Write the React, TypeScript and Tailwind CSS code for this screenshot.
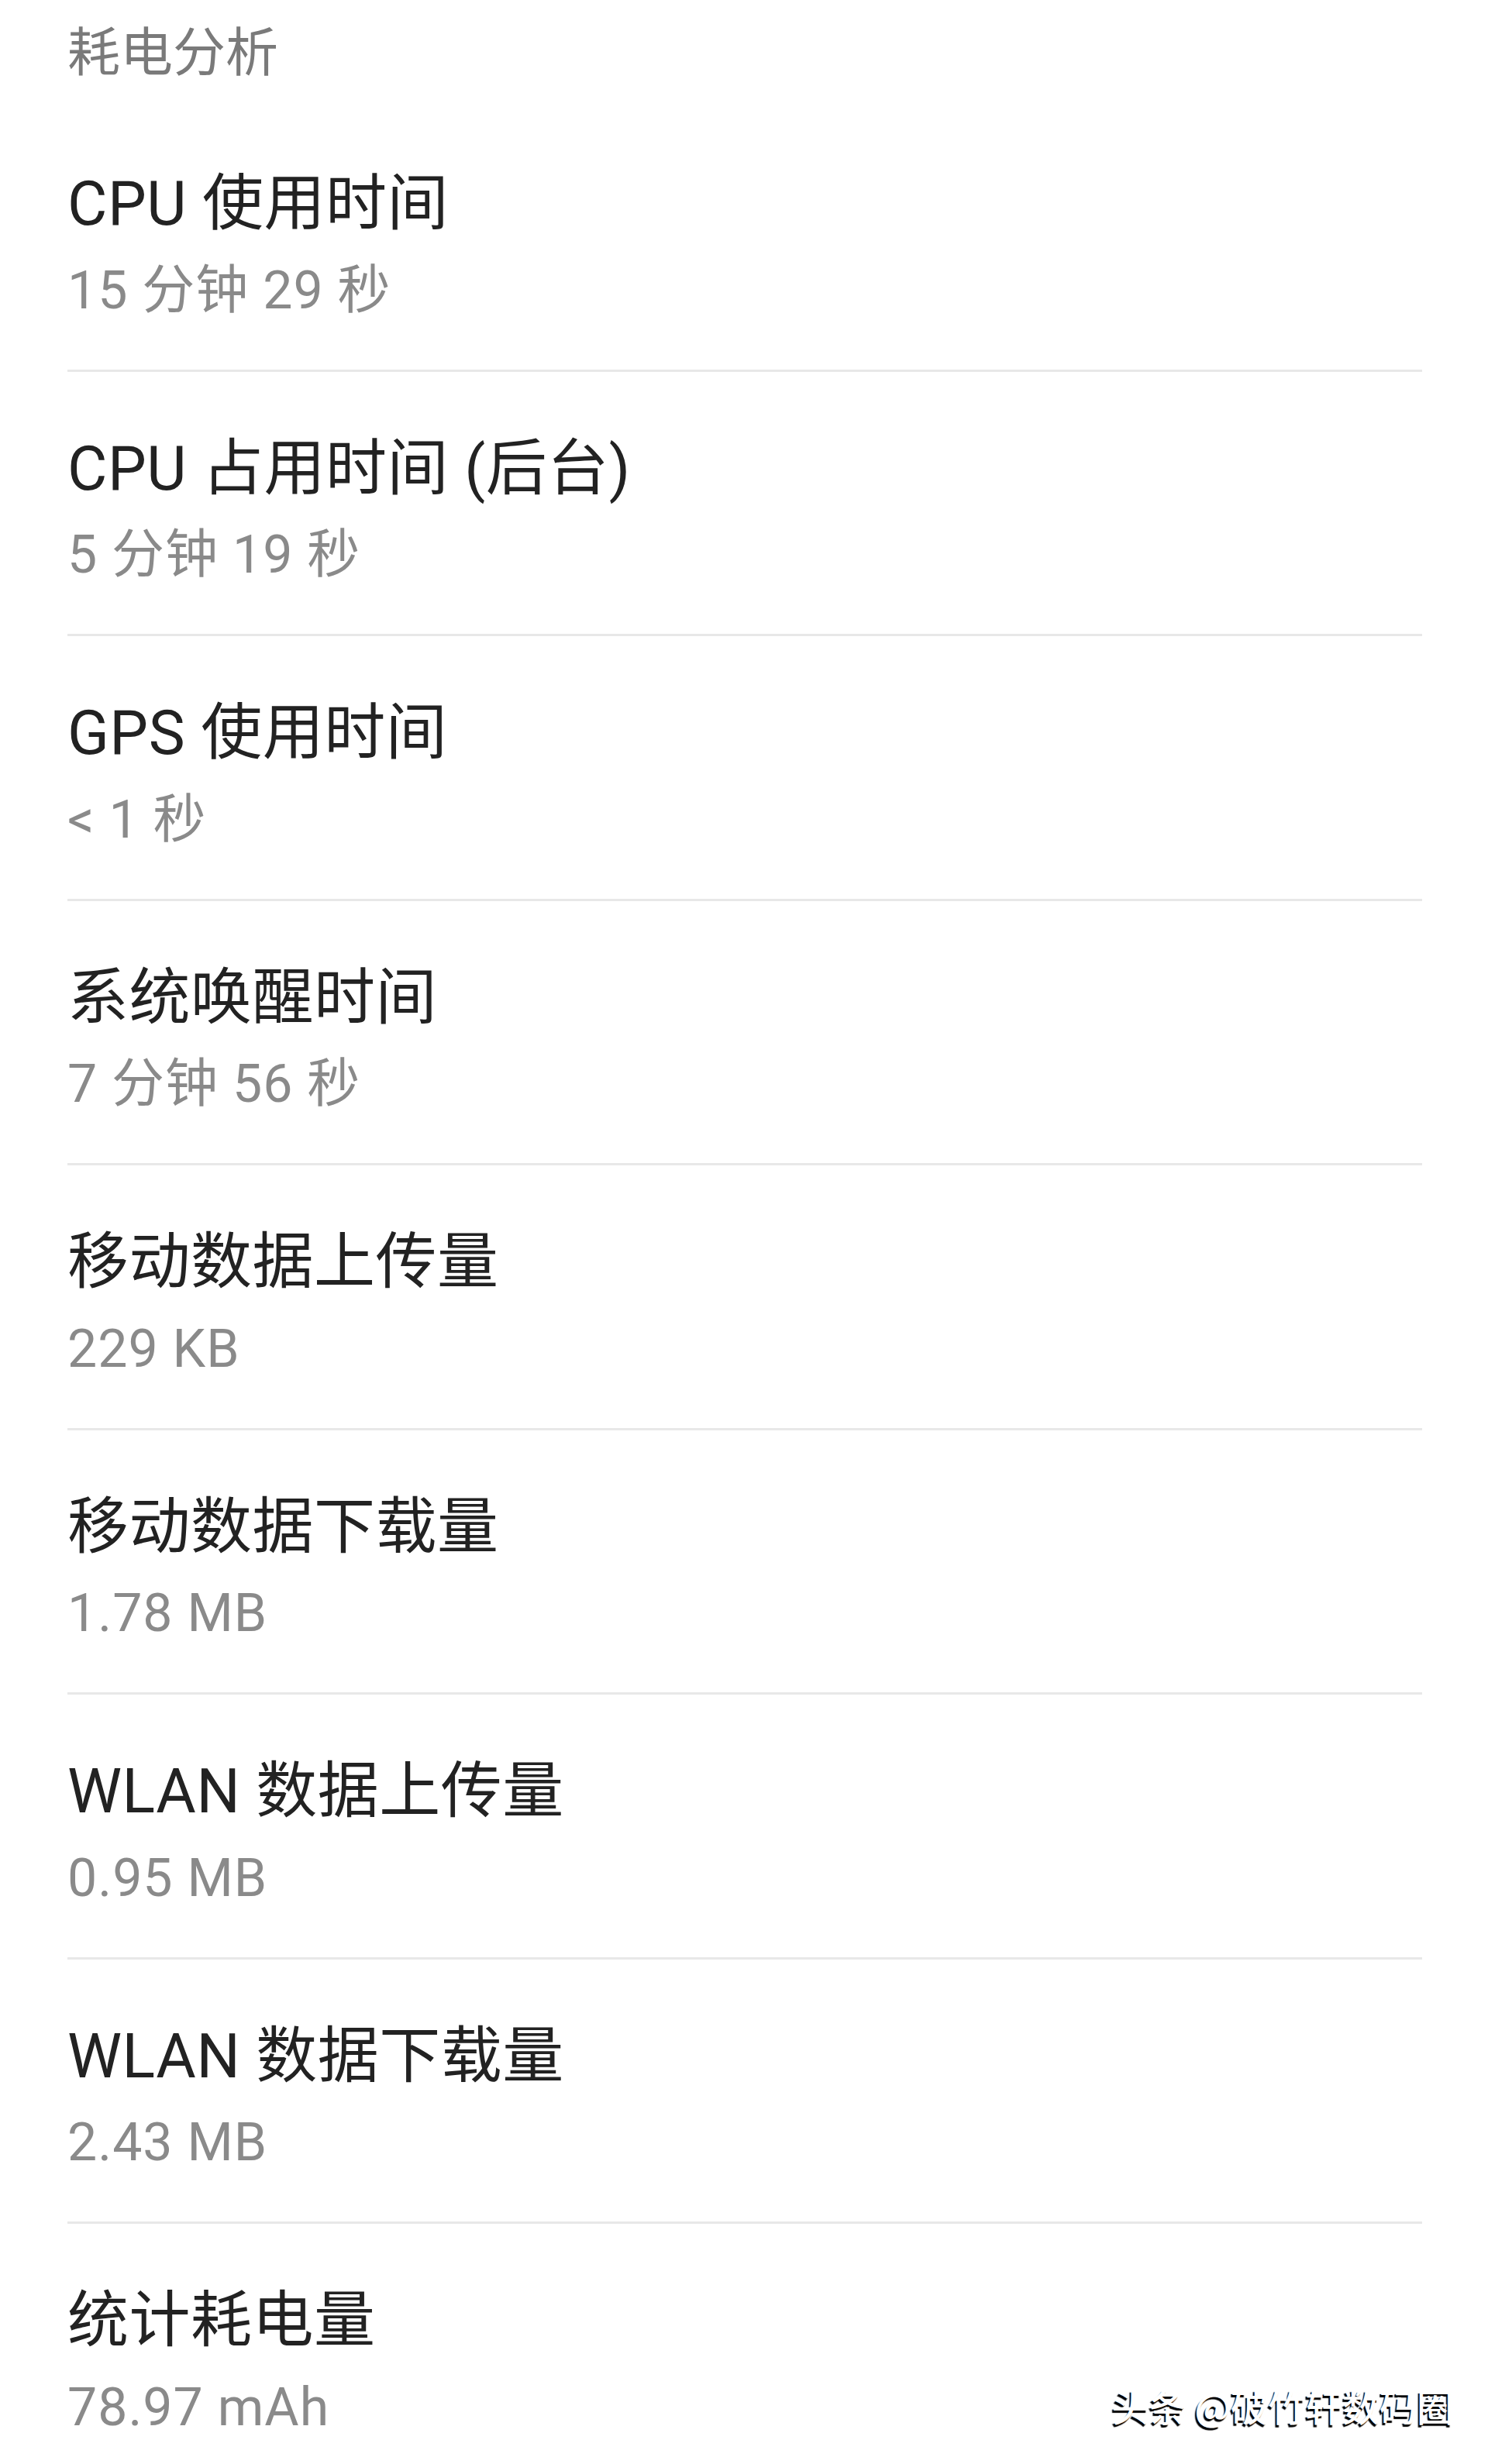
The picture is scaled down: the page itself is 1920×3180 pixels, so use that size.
const rows = [
  { title: "CPU 使用时间", value: "15 分钟 29 秒" },
  { title: "CPU 占用时间 (后台)", value: "5 分钟 19 秒" },
  { title: "GPS 使用时间", value: "< 1 秒" },
  { title: "系统唤醒时间", value: "7 分钟 56 秒" },
  { title: "移动数据上传量", value: "229 KB" },
  { title: "移动数据下载量", value: "1.78 MB" },
  { title: "WLAN 数据上传量", value: "0.95 MB" },
  { title: "WLAN 数据下载量", value: "2.43 MB" },
  { title: "统计耗电量", value: "78.97 mAh" },
];

export default function App() {
  return (
    <div className="relative w-[1920px] h-[3180px] overflow-hidden bg-white pl-[87px] pr-[85px] font-['Roboto','Noto_Sans_CJK_SC',sans-serif]">
      <div className="h-[138px] pt-[35px]">
        <h2 className="text-[68px] leading-none font-normal text-[#7a7a7a]">耗电分析</h2>
      </div>

      <ul className="flex flex-col">
        {rows.map((row, i) => (
          <li
            key={row.title}
            className={
              i < rows.length - 1
                ? "flex flex-col pt-[86px] pb-[68px] border-b-[3px] border-[#e8e8e8]"
                : "flex flex-col pt-[86px]"
            }
          >
            <span className="text-[79px] leading-none tracking-[0.5px] text-[#222222]">{row.title}</span>
            <span className="mt-[37.5px] text-[68px] leading-none tracking-[1px] text-[#8a8a8a]">{row.value}</span>
          </li>
        ))}
      </ul>

      {/* watermark */}
      <div className="absolute right-[44px] bottom-[52px] text-[48px] leading-none font-medium text-white font-['Noto_Sans_CJK_SC',sans-serif] [text-shadow:-2px_3px_1px_#000]">
        头条 @破竹轩数码圈
      </div>
    </div>
  );
}
